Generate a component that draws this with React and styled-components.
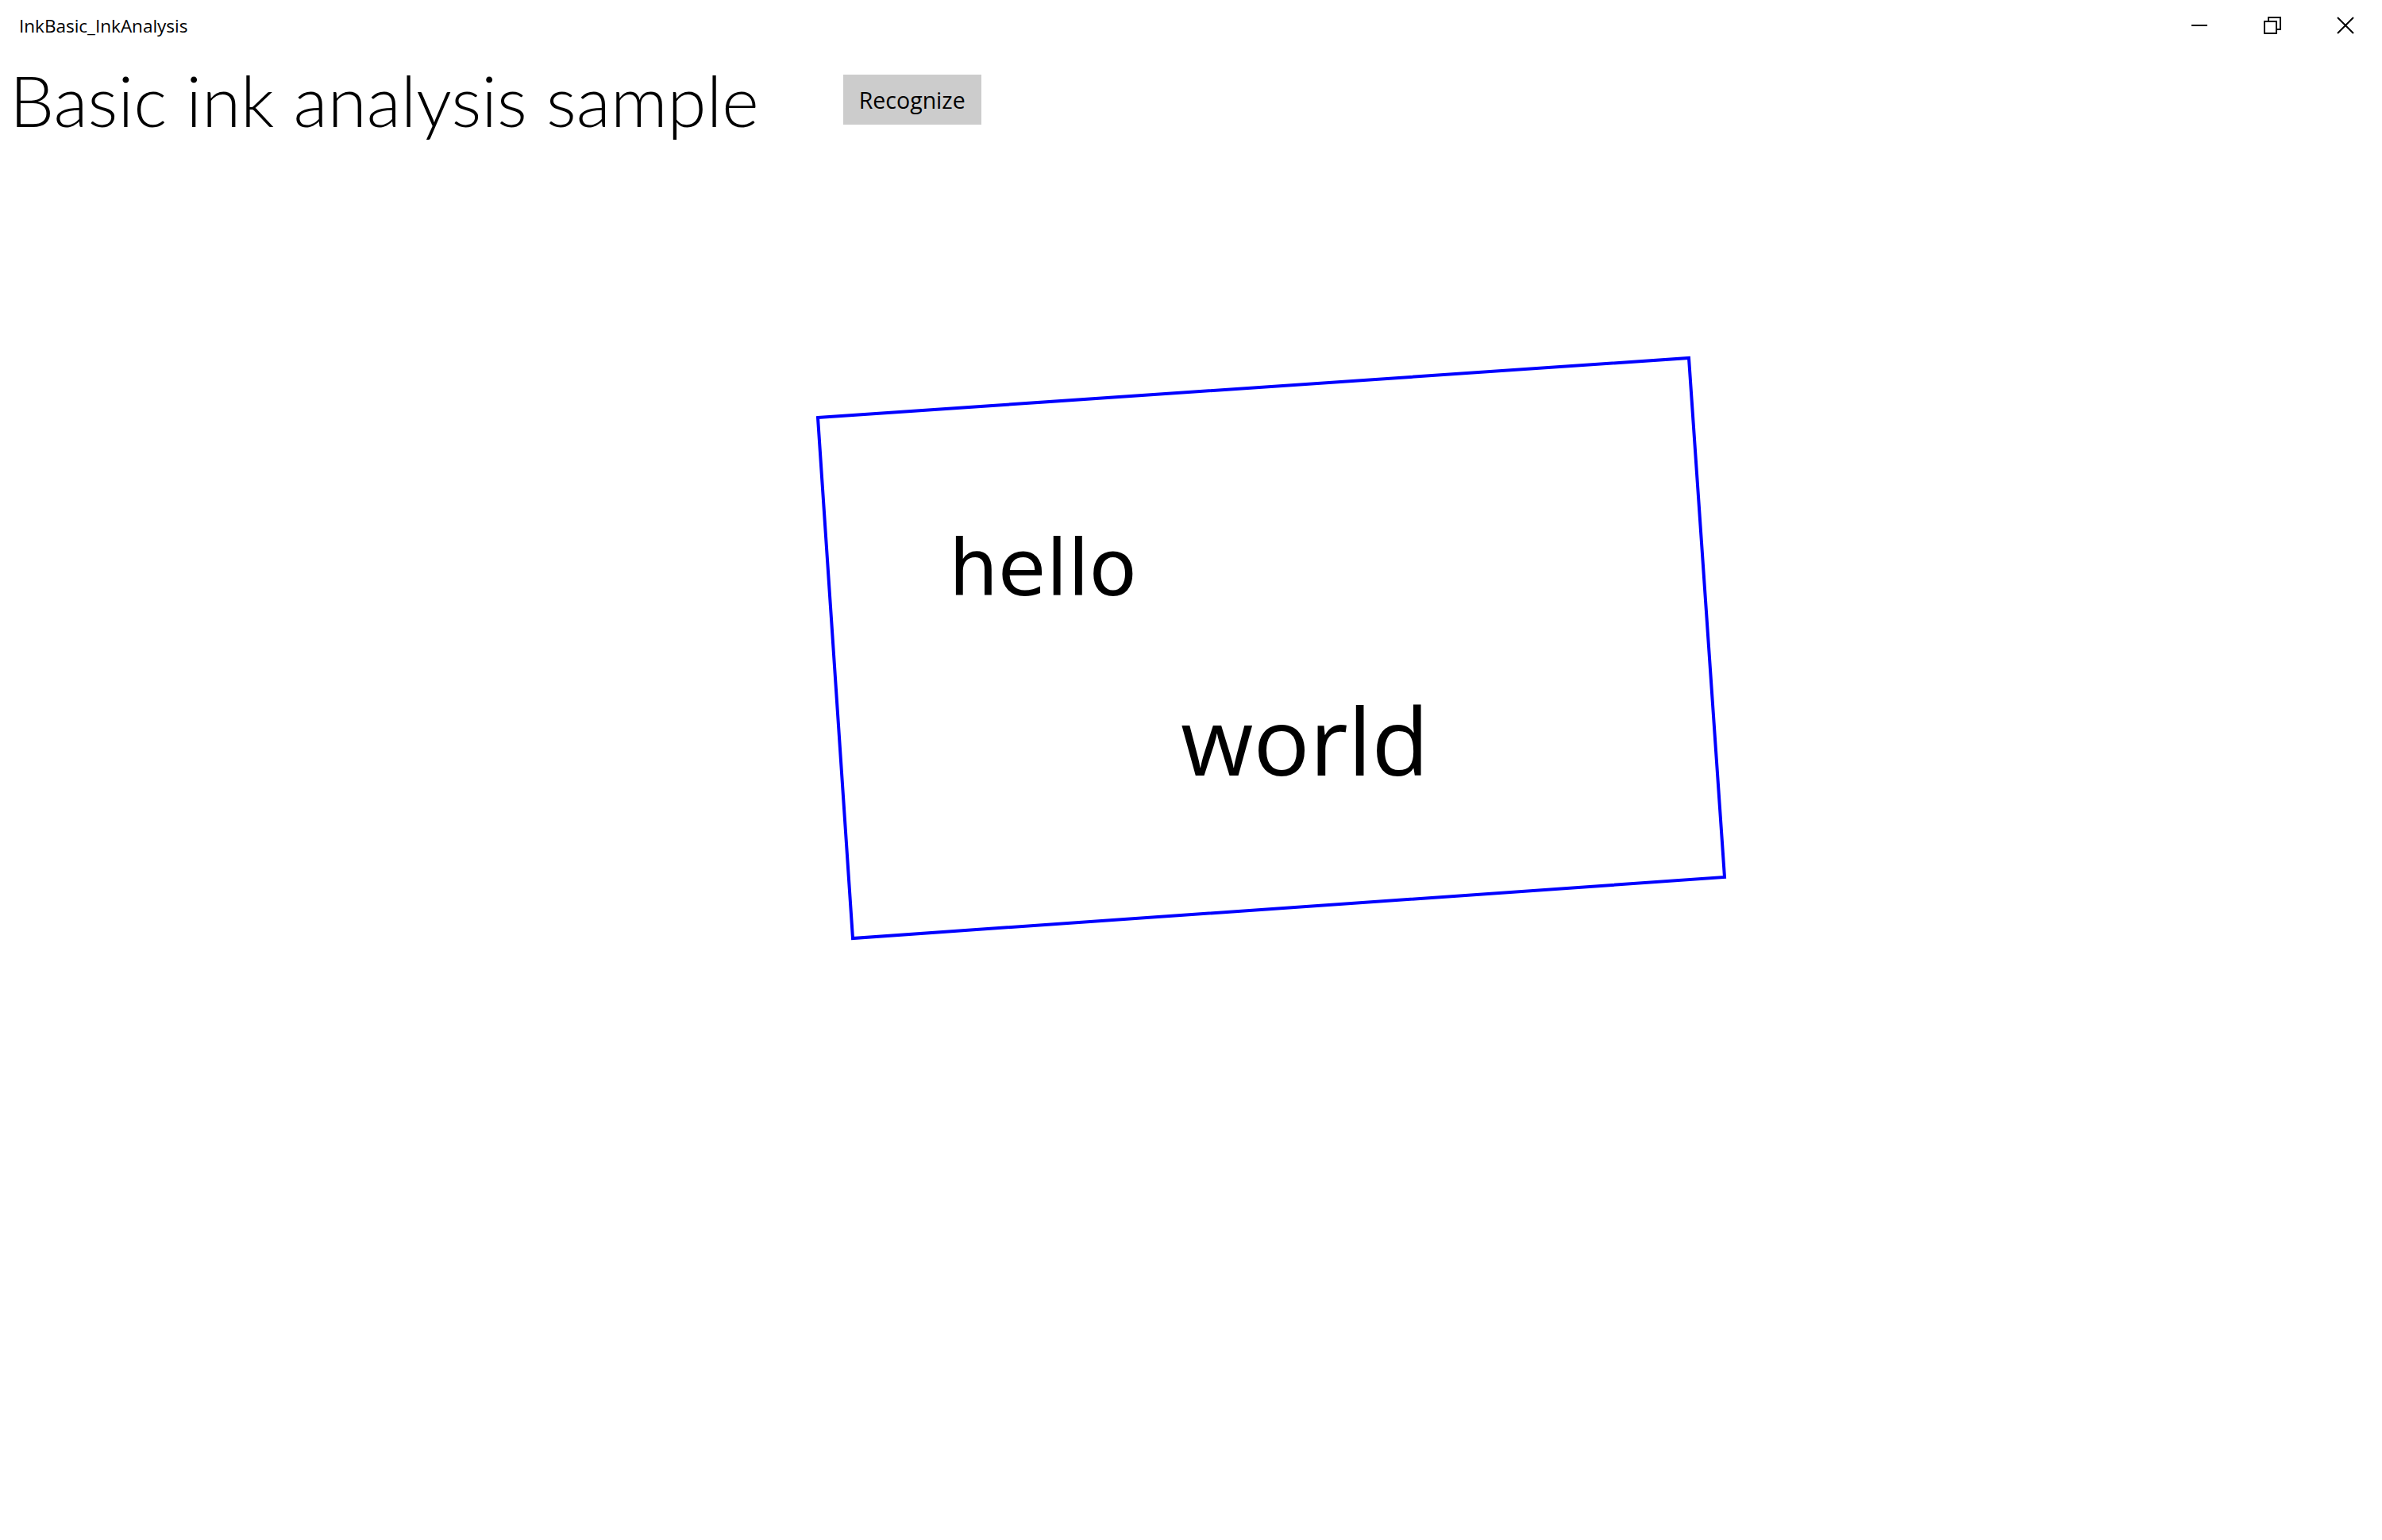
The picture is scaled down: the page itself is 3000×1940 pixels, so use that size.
import React from "react";
import styled, { createGlobalStyle } from "styled-components";

const GlobalStyle = createGlobalStyle`
  html, body {
    margin: 0;
    padding: 0;
    background: #ffffff;
  }
  body {
    font-family: "Open Sans", "Noto Sans", sans-serif;
    color: #000000;
  }
`;

const region = [
  [1030, 342],
  [2127, 267],
  [2172, 921],
  [1074, 998],
];

const words = [
  { text: "hello", left: 1195, top: 483, variant: "small" },
  { text: "world", left: 1487, top: 689, variant: "large" },
];

const App = () => {
  return (
    <Window>
      <GlobalStyle />
      <TitleBar>
        <AppName>InkBasic_InkAnalysis</AppName>
        <Controls>
          <ControlButton aria-label="Minimize">
            <svg width="22" height="22" viewBox="0 0 22 22">
              <line x1="1" y1="11" x2="21" y2="11" stroke="#000" strokeWidth="2" />
            </svg>
          </ControlButton>
          <ControlButton aria-label="Restore">
            <svg width="22" height="22" viewBox="0 0 22 22">
              <rect x="1" y="6" width="15" height="15" fill="none" stroke="#000" strokeWidth="2" />
              <path d="M6 6 V1 H21 V16 H16" fill="none" stroke="#000" strokeWidth="2" />
            </svg>
          </ControlButton>
          <ControlButton aria-label="Close">
            <svg width="22" height="22" viewBox="0 0 22 22">
              <path d="M1 1 L21 21 M21 1 L1 21" stroke="#000" strokeWidth="2" />
            </svg>
          </ControlButton>
        </Controls>
      </TitleBar>

      <Header>
        <Heading>Basic ink analysis sample</Heading>
        <RecognizeButton>Recognize</RecognizeButton>
      </Header>

      <InkCanvas>
        <Strokes width="3000" height="1756" viewBox="0 0 3000 1756">
          <polygon
            points={region.map((p) => p.join(",")).join(" ")}
            fill="none"
            stroke="#0000ff"
            strokeWidth="4"
            strokeLinejoin="miter"
          />
        </Strokes>
        {words.map((w) => (
          <Word key={w.text} $variant={w.variant} style={{ left: w.left, top: w.top }}>
            {w.text}
          </Word>
        ))}
      </InkCanvas>
    </Window>
  );
};

const Window = styled.div`
  width: 3000px;
  height: 1940px;
  display: flex;
  flex-direction: column;
  overflow: hidden;
  background: #ffffff;
`;

const TitleBar = styled.div`
  height: 64px;
  display: flex;
  align-items: center;
  justify-content: space-between;
  padding-left: 24px;
`;

const AppName = styled.span`
  font-family: "Open Sans", "Noto Sans", sans-serif;
  font-size: 22.5px;
  color: #000;
`;

const Controls = styled.div`
  display: flex;
  height: 100%;
`;

const ControlButton = styled.div`
  width: 92px;
  height: 64px;
  display: flex;
  align-items: center;
  justify-content: center;
`;

const Header = styled.div`
  height: 120px;
  display: flex;
  align-items: flex-start;
  gap: 106px;
  padding-left: 12px;
`;

const Heading = styled.h1`
  margin: 4px 0 0;
  font-family: "Lato", "Open Sans", sans-serif;
  font-weight: 300;
  font-size: 89px;
  line-height: 116px;
  color: #000;
`;

const RecognizeButton = styled.button`
  margin-top: 30px;
  width: 174px;
  height: 63px;
  border: none;
  background: #cccccc;
  color: #000;
  font-family: "Open Sans", "Noto Sans", sans-serif;
  font-size: 28.5px;
  padding: 0;
`;

const InkCanvas = styled.div`
  position: relative;
  flex: 1;
`;

const Strokes = styled.svg`
  position: absolute;
  inset: 0;
`;

const Word = styled.span`
  position: absolute;
  line-height: 1;
  white-space: nowrap;
  color: #000;
  font-family: ${(p) => (p.$variant === "small" ? '"DejaVu Sans", sans-serif' : '"Open Sans", sans-serif')};
  font-size: ${(p) => (p.$variant === "small" ? "98px" : "118px")};
`;

export default App;
